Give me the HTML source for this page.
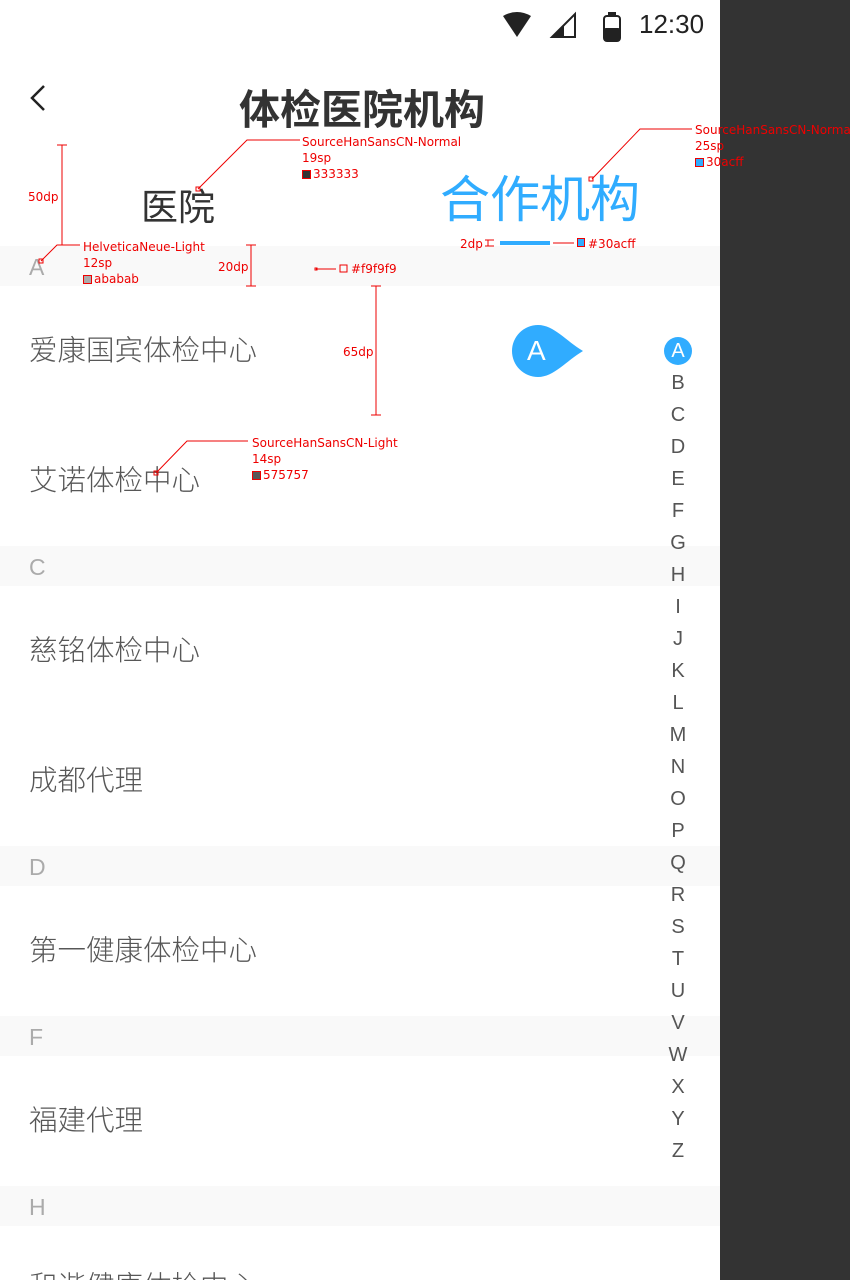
<!DOCTYPE html>
<html><head><meta charset="utf-8"><style>
*{margin:0;padding:0;box-sizing:border-box}
body{width:850px;height:1280px;overflow:hidden;background:#333;position:relative;font-family:"Liberation Sans","Noto Sans CJK SC",sans-serif}
#ph{position:absolute;left:0;top:0;width:720px;height:1280px;background:#fff;overflow:hidden}
.a{position:absolute;white-space:nowrap}
.sec{position:absolute;left:0;width:720px;height:40px;background:#f9f9f9;color:#ababab;font-size:23px;padding-left:29px;line-height:42px}
.row{position:absolute;left:29px;color:#575757;font-size:28.5px;font-weight:300;line-height:30px}
.idx{position:absolute;left:664px;width:28px;text-align:center;color:#555;font-size:20px;line-height:20px}
.r{color:#e00;font-size:12px;font-family:"DejaVu Sans",sans-serif;line-height:16px}
.sq{display:inline-block;width:9px;height:9px;border:1px solid #e00;vertical-align:-1px;margin-right:2px}
</style></head><body>
<div id="ph">
<svg class="a" style="left:500px;top:10px" width="210" height="34">
<path d="M3 6 Q17 -2 31 6 L17 27 Z" fill="#222"/>
<path d="M52 27 L75 4 L75 27 Z" fill="none" stroke="#222" stroke-width="2"/>
<path d="M52 27 L64 15 L64 27 Z" fill="#222"/>
<rect x="104" y="6" width="16" height="25" rx="3" fill="none" stroke="#222" stroke-width="2"/>
<rect x="108" y="2" width="8" height="4" fill="#222"/>
<rect x="104" y="18" width="16" height="13" rx="2" fill="#222"/>
</svg>
<div class="a" style="left:639px;top:9px;font-size:26px;color:#222">12:30</div>
<svg class="a" style="left:28px;top:84px" width="20" height="30"><path d="M16 2 L4 14 L16 26" fill="none" stroke="#222" stroke-width="2.5"/></svg>
<div class="a" style="left:239px;top:76px;font-size:41px;font-weight:bold;color:#333">体检医院机构</div>
<div class="a" style="left:141px;top:177px;font-size:37px;color:#333">医院</div>
<div class="a" style="left:440px;top:160px;font-size:50px;color:#30acff">合作机构</div>
<div class="sec" style="top:246px">A</div>
<div class="row" style="top:336px">爱康国宾体检中心</div>
<div class="row" style="top:466px">艾诺体检中心</div>
<div class="sec" style="top:546px">C</div>
<div class="row" style="top:636px">慈铭体检中心</div>
<div class="row" style="top:766px">成都代理</div>
<div class="sec" style="top:846px">D</div>
<div class="row" style="top:936px">第一健康体检中心</div>
<div class="sec" style="top:1016px">F</div>
<div class="row" style="top:1106px">福建代理</div>
<div class="sec" style="top:1186px">H</div>
<div class="row" style="top:1272px">和谐健康体检中心</div>
<svg class="a" style="left:510px;top:323px" width="80" height="56"><path d="M28 2 C44 2 56 18 73 28 C56 38 44 54 28 54 A26 26 0 0 1 28 2 Z" fill="#30acff"/></svg>
<div class="a" style="left:527px;top:335px;font-size:28px;color:#fff">A</div>
<div class="a" style="left:664px;top:337px;width:28px;height:28px;border-radius:50%;background:#30acff"></div>
<div class="idx" style="top:341px;color:#fff">A</div>
<div class="idx" style="top:373px">B</div><div class="idx" style="top:405px">C</div><div class="idx" style="top:437px">D</div><div class="idx" style="top:469px">E</div><div class="idx" style="top:501px">F</div><div class="idx" style="top:533px">G</div><div class="idx" style="top:565px">H</div><div class="idx" style="top:597px">I</div><div class="idx" style="top:629px">J</div><div class="idx" style="top:661px">K</div><div class="idx" style="top:693px">L</div><div class="idx" style="top:725px">M</div><div class="idx" style="top:757px">N</div><div class="idx" style="top:789px">O</div><div class="idx" style="top:821px">P</div><div class="idx" style="top:853px">Q</div><div class="idx" style="top:885px">R</div><div class="idx" style="top:917px">S</div><div class="idx" style="top:949px">T</div><div class="idx" style="top:981px">U</div><div class="idx" style="top:1013px">V</div><div class="idx" style="top:1045px">W</div><div class="idx" style="top:1077px">X</div><div class="idx" style="top:1109px">Y</div><div class="idx" style="top:1141px">Z</div>
<svg class="a" style="left:0;top:0" width="720" height="500" fill="none" stroke="#e00" stroke-width="1">
<path d="M57 145 H67 M62 145 V245 M57 245 H67"/>
<path d="M41 261 L57 245 H80"/>
<rect x="39" y="259" width="4" height="4"/>
<path d="M198 189 L247 140 H300"/>
<rect x="196" y="187" width="4" height="4"/>
<path d="M592 179 L640 129 H692"/>
<rect x="589" y="177" width="4" height="4"/>
<path d="M246 245 H256 M251 245 V286 M246 286 H256"/>
<path d="M316 269 H336"/><rect x="315" y="268" width="2" height="2"/>
<rect x="340" y="265" width="7" height="7"/>
<path d="M371 286 H381 M376 286 V415 M371 415 H381"/>
<path d="M156 473 L187 441 H248"/>
<rect x="154" y="471" width="4" height="4"/>
<path d="M488 240 V246 M485 240 H494 M485 246 H494"/>
<path d="M553 243 H574"/>
</svg>
<div class="a" style="left:500px;top:241px;width:50px;height:4px;background:#30acff"></div>
<div class="a" style="left:577px;top:238px;width:8px;height:9px;background:#30acff;border:1px solid #e00"></div>
<div class="a r" style="left:460px;top:236px">2dp</div>
<div class="a r" style="left:588px;top:236px">#30acff</div>
<div class="a r" style="left:28px;top:189px">50dp</div>
<div class="a r" style="left:83px;top:239px">HelveticaNeue-Light<br>12sp<br><span class="sq" style="background:#ababab"></span>ababab</div>
<div class="a r" style="left:302px;top:134px">SourceHanSansCN-Normal<br>19sp<br><span class="sq" style="background:#333"></span>333333</div>
<div class="a r" style="left:218px;top:259px">20dp</div>
<div class="a r" style="left:351px;top:261px">#f9f9f9</div>
<div class="a r" style="left:343px;top:344px">65dp</div>
<div class="a r" style="left:252px;top:435px">SourceHanSansCN-Light<br>14sp<br><span class="sq" style="background:#575757"></span>575757</div>
</div>
<div class="a r" style="left:695px;top:122px">SourceHanSansCN-Normal<br>25sp<br><span class="sq" style="background:#30acff"></span>30acff</div>
</body></html>
